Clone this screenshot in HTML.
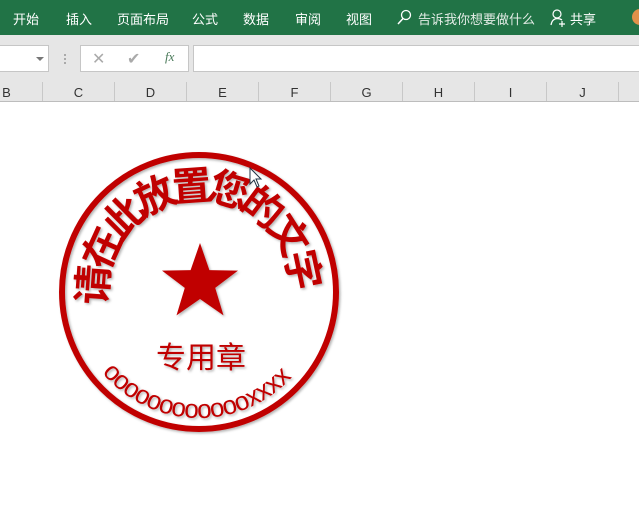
<!DOCTYPE html>
<html><head><meta charset="utf-8"><style>
*{margin:0;padding:0;box-sizing:border-box}
body{width:639px;height:520px;overflow:hidden;background:#fff;font-family:"Liberation Sans","Noto Sans CJK SC",sans-serif;position:relative}
.top{position:absolute;left:0;top:0;width:639px;height:35px;background:#217346;color:#fff;font-size:13px}
.top span{position:absolute;top:9px}
.bar{position:absolute;left:0;top:35px;width:639px;height:47px;background:#e6e6e6}
.box{position:absolute;background:#fff;border:1px solid #c6c6c6}
.cols{position:absolute;left:0;top:82px;width:639px;height:20px;background:#e6e6e6;border-bottom:1px solid #bdbdbd}
.cols div{position:absolute;top:0;height:19px;width:72px;border-right:1px solid #c8c8c8;text-align:center;font-size:13px;line-height:21px;color:#333}
</style></head><body>
<div class="top">
<span style="left:13px">开始</span><span style="left:66px">插入</span><span style="left:117px">页面布局</span><span style="left:192px">公式</span><span style="left:243px">数据</span><span style="left:295px">审阅</span><span style="left:346px">视图</span>
<svg style="position:absolute;left:396px;top:9px" width="16" height="18"><circle cx="10" cy="6" r="4.5" fill="none" stroke="#fff" stroke-width="1.3"/><line x1="7" y1="9.5" x2="2" y2="15" stroke="#fff" stroke-width="1.5"/></svg>
<span style="left:418px;color:#e3ece6">告诉我你想要做什么</span>
<svg style="position:absolute;left:550px;top:9px" width="16" height="18"><circle cx="7" cy="5" r="4" fill="none" stroke="#fff" stroke-width="1.2"/><path d="M1 16 Q2 10 7 9.5 Q10 9.5 12 11" fill="none" stroke="#fff" stroke-width="1.2"/><path d="M12 12v6M9 15h6" stroke="#fff" stroke-width="1.2"/></svg>
<span style="left:570px">共享</span>
<div style="position:absolute;left:632px;top:9px;width:16px;height:16px;border-radius:50%;background:#e0914a"></div>
</div>
<div class="bar">
<div class="box" style="left:-2px;top:10px;width:51px;height:27px"></div>
<div style="position:absolute;left:36px;top:22px;border:4px solid transparent;border-top:4px solid #777;border-bottom:0"></div>
<div style="position:absolute;left:64px;top:19px;width:2px;height:10px;border-left:2px dotted #aaa"></div>
<div class="box" style="left:80px;top:10px;width:109px;height:27px"></div>
<span style="position:absolute;left:92px;top:14px;color:#aaa;font-size:16px">✕</span>
<span style="position:absolute;left:127px;top:14px;color:#aaa;font-size:16px">✔</span>
<span style="position:absolute;left:165px;top:14px;color:#4a7a5a;font-family:'Liberation Serif',serif;font-style:italic;font-size:13px">fx</span>
<div class="box" style="left:193px;top:10px;width:450px;height:27px"></div>
</div>
<div class="cols">
<div style="left:-29px">B</div><div style="left:43px">C</div><div style="left:115px">D</div><div style="left:187px">E</div><div style="left:259px">F</div><div style="left:331px">G</div><div style="left:403px">H</div><div style="left:475px">I</div><div style="left:547px">J</div><div style="left:619px"></div>
</div>
<svg style="position:absolute;left:0;top:0" width="639" height="520">
<defs><filter id="s" x="-20%" y="-20%" width="140%" height="140%"><feDropShadow dx="1.5" dy="1.5" stdDeviation="1.2" flood-color="#000" flood-opacity="0.3"/></filter></defs>
<g filter="url(#s)" fill="#c00000">
<circle cx="199" cy="292" r="137" fill="none" stroke="#c00000" stroke-width="6"/>
<polygon points="200,243 209.4,270.1 238,270.6 215.2,287.9 223.5,315.4 200,299 176.5,315.4 184.8,287.9 162,270.6 190.6,270.1"/>
<text x="201" y="368" font-size="30" text-anchor="middle" font-family="'Noto Sans CJK SC',sans-serif">专用章</text>
<g font-size="40" font-weight="bold" font-family="'Noto Sans CJK SC',sans-serif" text-anchor="middle">
<g transform="translate(199,292) rotate(-86)"><text y="-92">请</text></g>
<g transform="translate(199,292) rotate(-65.5)"><text y="-92">在</text></g>
<g transform="translate(199,292) rotate(-45)"><text y="-92">此</text></g>
<g transform="translate(199,292) rotate(-24.5)"><text y="-92">放</text></g>
<g transform="translate(199,292) rotate(-4)"><text y="-92">置</text></g>
<g transform="translate(199,292) rotate(16.5)"><text y="-92">您</text></g>
<g transform="translate(199,292) rotate(37)"><text y="-92">的</text></g>
<g transform="translate(199,292) rotate(57.5)"><text y="-92">文</text></g>
<g transform="translate(199,292) rotate(78)"><text y="-92">字</text></g>
</g>
<g font-size="26" font-family="'Liberation Sans',sans-serif" text-anchor="middle">
<g transform="translate(199,292) rotate(47)"><text y="126">o</text></g>
<g transform="translate(199,292) rotate(40.8)"><text y="126">o</text></g>
<g transform="translate(199,292) rotate(34.6)"><text y="126">o</text></g>
<g transform="translate(199,292) rotate(28.4)"><text y="126">o</text></g>
<g transform="translate(199,292) rotate(22.2)"><text y="126">o</text></g>
<g transform="translate(199,292) rotate(16)"><text y="126">o</text></g>
<g transform="translate(199,292) rotate(9.8)"><text y="126">o</text></g>
<g transform="translate(199,292) rotate(3.6)"><text y="126">o</text></g>
<g transform="translate(199,292) rotate(-2.6)"><text y="126">o</text></g>
<g transform="translate(199,292) rotate(-8.8)"><text y="126">o</text></g>
<g transform="translate(199,292) rotate(-15)"><text y="126">o</text></g>
<g transform="translate(199,292) rotate(-21.2)"><text y="126">o</text></g>
<g transform="translate(199,292) rotate(-27.2)"><text y="126">x</text></g>
<g transform="translate(199,292) rotate(-33)"><text y="126">x</text></g>
<g transform="translate(199,292) rotate(-38.8)"><text y="126">x</text></g>
<g transform="translate(199,292) rotate(-44.6)"><text y="126">x</text></g>
</g>
</g>
<path d="M250 168 L250 184 L254 180 L257 187 L259 186 L256 179 L261 179 Z" fill="#fff" stroke="#234" stroke-width="1"/>
</svg>
</body></html>
